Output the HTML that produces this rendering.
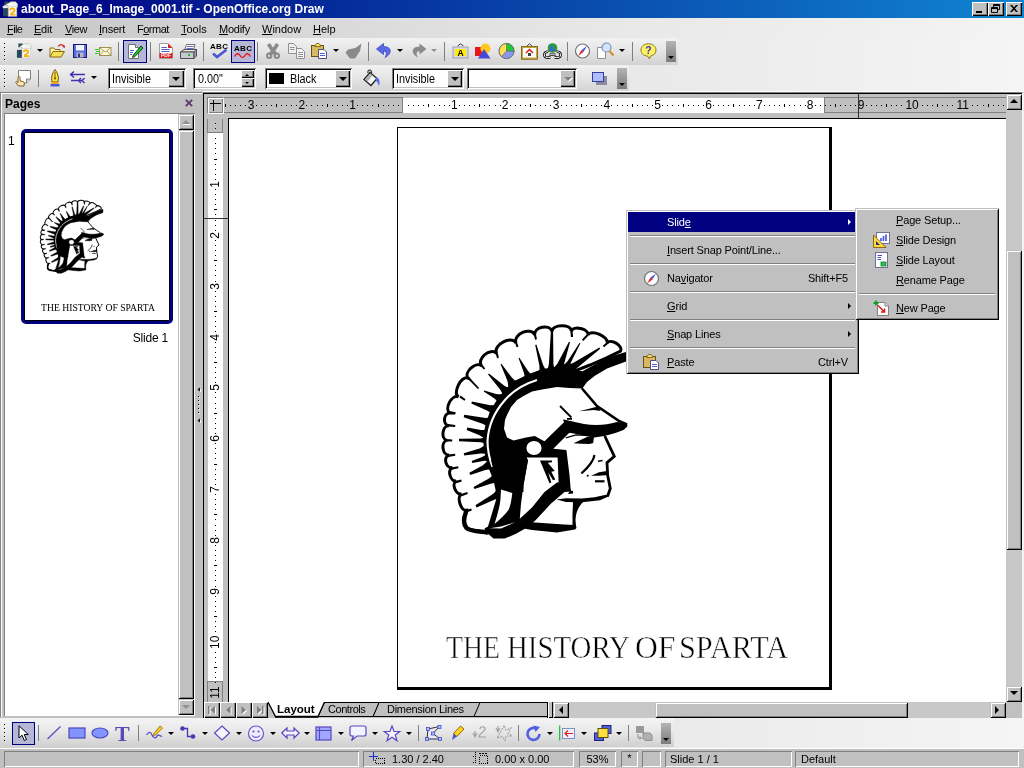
<!DOCTYPE html>
<html><head><meta charset="utf-8"><title>OpenOffice.org Draw</title>
<style>
html,body{margin:0;padding:0;}
body{width:1024px;height:768px;overflow:hidden;position:relative;background:#c0c0c0;font-family:"Liberation Sans",sans-serif;font-size:11px;color:#000;}
.a{position:absolute;}
.t{position:absolute;white-space:nowrap;line-height:13px;}
u{text-decoration:underline;text-underline-offset:1px;}
.sep{position:absolute;width:1px;background:#808080;height:19px;}
.dd{position:absolute;width:0;height:0;border-left:3px solid transparent;border-right:3px solid transparent;border-top:3px solid #000;}
.dot{position:absolute;width:2px;background-image:repeating-linear-gradient(180deg,#000 0,#000 1px,transparent 1px,transparent 4px),repeating-linear-gradient(180deg,transparent 0,transparent 1px,#fff 1px,#fff 2px,transparent 2px,transparent 4px);background-size:1px 100%,1px 100%;background-position:0 0,1px 0;background-repeat:no-repeat;}
.raised{position:absolute;background:#c0c0c0;box-shadow:inset 1px 1px 0 #fff,inset -1px -1px 0 #000,inset -2px -2px 0 #808080;}
.sunk{position:absolute;background:#fff;box-shadow:inset 1px 1px 0 #808080,inset -1px -1px 0 #fff,inset 2px 2px 0 #000,inset -2px -2px 0 #c0c0c0;}
.fld{position:absolute;box-shadow:inset 1px 1px 0 #808080,inset -1px -1px 0 #fff;height:16px;top:751px;}
.pressed{position:absolute;background:#b6b6d6;border:1px solid #000080;box-sizing:border-box;}
svg{position:absolute;overflow:visible;}
.mi{font-size:11px;line-height:14px;letter-spacing:-0.150px;}
.msep{position:absolute;height:2px;background:linear-gradient(180deg,#808080 0,#808080 50%,#fff 50%,#fff 100%);}
.marr{position:absolute;width:0;height:0;border-top:3px solid transparent;border-bottom:3px solid transparent;border-left:3px solid #000;}
.rn{font-size:12px;line-height:15px;}
.mt{font-family:'Liberation Serif',serif;font-size:32px;line-height:36px;transform-origin:0 0;-webkit-text-stroke:0.5px #fff;}
.sbtn{position:absolute;background:#c0c0c0;box-shadow:inset 1px 1px 0 #c0c0c0,inset -1px -1px 0 #000,inset 2px 2px 0 #fff,inset -2px -2px 0 #808080;}
#root{position:absolute;left:0;top:0;width:1024px;height:768px;will-change:transform;}

</style></head>
<body>
<div id="root">
<!-- title bar -->
<div class="a" style="left:0;top:0;width:1024px;height:18px;background:linear-gradient(90deg,#000080 0,#1084d0 100%);"></div>
<svg style="left:2px;top:1px" width="16" height="16" viewBox="0 0 16.500 16.500"><path d="M2.500 0.500 H7 V5 H2.500Z" fill="#2a4e56"/><path d="M1 6.500 H6.500 V15.800 H1Z" fill="#27485a"/><path d="M0.500 5.800 L3 4.200 L6.500 5 L6.500 7.200 L1 7.500 Z" fill="#e8e8e8"/><path d="M6 3 L9 0.800 L14 0.800 L16 3 V6.500 H6Z" fill="#f2f2f2" stroke="#b8b8a8" stroke-width="0.600"/><path d="M4 3.200 L9.500 2.300 L10 3.500 L5 4.500Z" fill="#fff"/><path d="M6.500 6 H15.200 V15.800 H6.500Z" fill="#fff" stroke="#c4c4c4" stroke-width="0.600"/><path d="M8.300 9.800 C8.300 7 13 7 13 9.800 C13 12 9 11.600 9.200 14 H14" stroke="#f8b010" stroke-width="1.900" fill="none"/></svg>
<div class="t" style="left:21px;top:2px;color:#fff;font-weight:bold;font-size:12px;line-height:14px;letter-spacing:0.030px">about_Page_6_Image_0001.tif - OpenOffice.org Draw</div>
<div class="raised" style="left:972px;top:2px;width:16px;height:14px"></div>
<div class="a" style="left:976px;top:11px;width:6px;height:2px;background:#000"></div>
<div class="raised" style="left:988px;top:2px;width:16px;height:14px"></div>
<svg style="left:991px;top:4px" width="10" height="10" viewBox="0 0 10 10"><path d="M2.5 0.5 H8.5 V5.5 H6.5 M2.5 1.5 H8.5 M2.5 0.5 V3" fill="none" stroke="#000" stroke-width="1"/><path d="M0.5 3.5 H6.5 V8.5 H0.5 Z M0.5 4.5 H6.5" fill="none" stroke="#000" stroke-width="1"/></svg>
<div class="raised" style="left:1006px;top:2px;width:16px;height:14px"></div>
<svg style="left:1010px;top:5px" width="8" height="7" viewBox="0 0 8 7"><path d="M0 0 H2 L4 2.3 L6 0 H8 L5 3.5 L8 7 H6 L4 4.7 L2 7 H0 L3 3.5 Z" fill="#000"/></svg>
<!-- menu bar -->
<div class="a" style="left:0;top:18px;width:1024px;height:20px;background:linear-gradient(90deg,#c6c6c6 0,#d8d8d8 30%,#e8e8e8 60%,#f4f4f4 100%);"></div>
<div class="t" style="left:7px;top:23px;letter-spacing:-0.600px"><u>F</u>ile</div>
<div class="t" style="left:34px;top:23px;letter-spacing:-0.250px"><u>E</u>dit</div>
<div class="t" style="left:65px;top:23px;letter-spacing:-0.400px"><u>V</u>iew</div>
<div class="t" style="left:99px;top:23px;letter-spacing:-0.250px"><u>I</u>nsert</div>
<div class="t" style="left:137px;top:23px;letter-spacing:-0.500px">F<u>o</u>rmat</div>
<div class="t" style="left:181px;top:23px"><u>T</u>ools</div>
<div class="t" style="left:219px;top:23px;letter-spacing:-0.250px"><u>M</u>odify</div>
<div class="t" style="left:262px;top:23px"><u>W</u>indow</div>
<div class="t" style="left:313px;top:23px"><u>H</u>elp</div>

<!-- toolbar background -->
<div class="a" style="left:0;top:38px;width:1024px;height:54px;background:linear-gradient(90deg,#cecece 0,#dadada 30%,#e8e8e8 60%,#f5f5f5 100%);"></div>
<div class="a" style="left:0;top:38px;width:678px;height:27px;background:linear-gradient(180deg,#f2f2f2 0,#e6e6e6 45%,#d2d2d2 100%);"></div>
<div class="a" style="left:0;top:65px;width:629px;height:27px;background:linear-gradient(180deg,#f2f2f2 0,#e6e6e6 45%,#d2d2d2 100%);"></div>
<!-- toolbar 1 -->
<div class="dot" style="left:4px;top:43px;height:18px"></div>
<svg style="left:16px;top:43px" width="15.500" height="15.500" viewBox="0 0 16.500 16.500"><path d="M2.500 0.500 H7 V5 H2.500Z" fill="#2a4e56"/><path d="M1 6.500 H6.500 V15.800 H1Z" fill="#27485a"/><path d="M0.500 5.800 L3 4.200 L6.500 5 L6.500 7.200 L1 7.500 Z" fill="#e8e8e8"/><path d="M6 3 L9 0.800 L14 0.800 L16 3 V6.500 H6Z" fill="#f2f2f2" stroke="#b8b8a8" stroke-width="0.600"/><path d="M4 3.200 L9.500 2.300 L10 3.500 L5 4.500Z" fill="#fff"/><path d="M6.500 6 H15.200 V15.800 H6.500Z" fill="#fff" stroke="#c4c4c4" stroke-width="0.600"/><path d="M8.300 9.800 C8.300 7 13 7 13 9.800 C13 12 9 11.600 9.200 14 H14" stroke="#f8b010" stroke-width="1.900" fill="none"/></svg>
<div class="dd" style="left:37px;top:49px"></div>
<svg style="left:49px;top:43px" width="17" height="16" viewBox="0 0 17 16"><path d="M1 14 V5 H5 L6 6.5 H11 V9" fill="#fff6b0" stroke="#8a6a10" stroke-width="1"/><path d="M1 14 L4 8.5 H15.5 L12 14 Z" fill="#f6e05a" stroke="#8a6a10" stroke-width="1"/><path d="M9 3.5 C11 1 14 1 15 4" fill="none" stroke="#d02020" stroke-width="1.2"/><path d="M13.2 3.2 L15.6 5.2 L16 2.2Z" fill="#d02020"/></svg>
<svg style="left:73px;top:44px" width="14" height="14" viewBox="0 0 14 14"><rect x="0.5" y="0.5" width="13" height="13" fill="#5a6ee0" stroke="#1a1a70"/><rect x="3" y="1" width="8" height="5.5" fill="#f4f4ff"/><rect x="3.5" y="8.5" width="7" height="5" fill="#b8b8c8"/><rect x="5" y="9.5" width="2" height="3.5" fill="#30308a"/></svg>
<svg style="left:95px;top:46px" width="17" height="11" viewBox="0 0 17 11"><rect x="4.5" y="1.5" width="11.5" height="8" fill="#fffbd8" stroke="#a09050"/><path d="M4.5 1.5 L10.2 6 L16 1.5 M4.5 9.5 L8.5 5 M16 9.5 L12 5" fill="none" stroke="#a09050" stroke-width="0.9"/><path d="M0 3.5 H3.5 M1 5.5 H4 M0 7.5 H3.5" stroke="#20d020" stroke-width="1.2"/></svg>
<div class="sep" style="left:118px;top:42px"></div>
<div class="pressed" style="left:123px;top:40px;width:24px;height:23px"></div>
<svg style="left:127px;top:43px" width="17" height="17" viewBox="0 0 17 17"><path d="M1.5 1.5 H8.5 L11.5 4.5 V15.5 H1.5 Z" fill="#fff" stroke="#707070"/><path d="M8.5 1.5 V4.5 H11.5" fill="#e0e0e0" stroke="#707070"/><path d="M3 7.5 H7 M3 9.5 H6 M3 11.5 H5" stroke="#5060d0" stroke-width="1"/><path d="M14 3 L16 5 L8 13.5 L5.5 14.5 L6.3 12 Z" fill="#18c838" stroke="#103010" stroke-width="0.9"/></svg>
<div class="sep" style="left:150px;top:42px"></div>
<svg style="left:159px;top:43px" width="14" height="16" viewBox="0 0 14 16"><path d="M0.5 0.5 H9 L13.5 5 V15.5 H0.5 Z" fill="#fff" stroke="#a0a0a0"/><path d="M9 0.5 L13.5 5 H9 Z" fill="#e02020"/><path d="M2.5 4.5 H8 M2.5 6.5 H10.5 M2.5 8.5 H10.5" stroke="#5060d0"/><rect x="0.5" y="10" width="13" height="5" fill="#e02020"/><text x="7" y="14.3" font-size="5" font-weight="bold" fill="#fff" text-anchor="middle" font-family="Liberation Sans,sans-serif">PDF</text></svg>
<svg style="left:180px;top:44px" width="18" height="15" viewBox="0 0 18 15"><path d="M4.5 6 L6.5 0.5 H15 L13.5 6" fill="#fff" stroke="#707070"/><path d="M7 2.5 H13.5 M6.5 4.5 H13" stroke="#5060d0" stroke-width="0.9"/><path d="M0.5 8 L4 5.5 H16.5 L14 8 Z" fill="#e8e8e8" stroke="#505050"/><path d="M0.5 8 H14 V14.5 H0.5 Z" fill="#c4c8d0" stroke="#505050"/><path d="M14 8 L16.5 5.5 V12 L14 14.5Z" fill="#9aa0a8" stroke="#505050"/><rect x="8" y="10" width="2" height="2" fill="#10c030"/></svg>
<div class="sep" style="left:203px;top:42px"></div>
<div class="t" style="left:210px;top:42px;font-size:8px;font-weight:bold;line-height:9px;letter-spacing:0.3px">ABC</div>
<svg style="left:212px;top:49px" width="16" height="10" viewBox="0 0 16 10"><path d="M1 4.5 L5 8 L14.5 0.8" fill="none" stroke="#4858d0" stroke-width="2.6"/></svg>
<div class="pressed" style="left:231px;top:40px;width:24px;height:23px"></div>
<div class="t" style="left:234px;top:44px;font-size:8px;font-weight:bold;line-height:9px;letter-spacing:0.3px">ABC</div>
<svg style="left:234px;top:53px" width="17" height="5" viewBox="0 0 17 5"><path d="M0.5 3.5 C2.5 0 4.5 0 6 2.5 S9.500 5 11 2.500 S14.500 0 16.5 3.500" fill="none" stroke="#f01010" stroke-width="1.3"/></svg>
<div class="sep" style="left:257px;top:42px"></div>
<svg style="left:266px;top:43px" width="14" height="16" viewBox="0 0 14 16"><path d="M2.500 1 L7 8 L11.500 1 M7 8 L3.500 12 M7 8 L10.500 12" fill="none" stroke="#8a8a8a" stroke-width="3.600" stroke-linejoin="round"/><circle cx="3.200" cy="12.800" r="2.200" fill="none" stroke="#8a8a8a" stroke-width="2"/><circle cx="10.800" cy="12.800" r="2.200" fill="none" stroke="#8a8a8a" stroke-width="2"/></svg>
<svg style="left:288px;top:43px" width="17" height="16" viewBox="0 0 17 16"><path d="M0.500 0.500 H5.5 L8.500 3.500 V10.500 H0.500 Z" fill="#f0f0f0" stroke="#909090"/><path d="M2 4.5 H6.500 M2 6.500 H6.500" stroke="#909090"/><path d="M8.500 5.500 H13.500 L16.500 8.500 V15.500 H8.500 Z" fill="#f8f8f8" stroke="#909090"/><path d="M10 9.500 H15 M10 11.500 H15 M10 13.500 H15" stroke="#909090"/></svg>
<svg style="left:311px;top:43px" width="17" height="16" viewBox="0 0 17 16"><rect x="0.500" y="2.500" width="12" height="11" fill="#d8b860" stroke="#6a5018"/><path d="M4 2.500 L5.500 0.500 H8 L9.500 2.500 V3.500 H4Z" fill="#f8e060" stroke="#6a5018" stroke-width="0.8"/><path d="M7.500 6.500 H13 L15.500 9 V15.500 H7.500 Z" fill="#fff" stroke="#505080"/><path d="M9 10.500 H14 M9 12.500 H14" stroke="#5060d0"/></svg>
<div class="dd" style="left:333px;top:49px"></div>
<svg style="left:345px;top:43px" width="17" height="16" viewBox="0 0 17 16"><path d="M16.500 0.500 L15 8 L10 15.500 H5 L0.500 9.500 L3 6.500 L10.500 5 Z" fill="#8a8a8a"/></svg>
<div class="sep" style="left:368px;top:42px"></div>
<svg style="left:376px;top:43px" width="17" height="15" viewBox="0 0 17 15"><path d="M7.500 0.500 L0.500 6 L7.500 11.500 V8.300 C10.500 8.300 11.500 10.500 9 14.500 C16 11 16.500 3.800 7.500 3.500 Z" fill="#5868e8" stroke="#3848b0" stroke-width="0.800"/></svg>
<div class="dd" style="left:397px;top:49px"></div>
<svg style="left:410px;top:43px" width="17" height="15" viewBox="0 0 17 15"><path d="M9.500 0.500 L16.500 6 L9.500 11.500 V8.300 C6.500 8.300 5.500 10.500 8 14.500 C1 11 0.500 3.800 9.500 3.500 Z" fill="#8a8a8a"/></svg>
<div class="dd" style="left:431px;top:49px;border-top-color:#909090"></div>
<div class="sep" style="left:444px;top:42px"></div>
<svg style="left:452px;top:43px" width="17" height="16" viewBox="0 0 17 16"><path d="M5.500 3 L8.500 0.800 L11.500 3" fill="none" stroke="#404040"/><rect x="1" y="4" width="15" height="11" fill="#d8d8e0" stroke="#a0a0b0"/><rect x="3" y="6" width="11" height="7" fill="#ffee00"/><text x="8.500" y="13" font-size="8.500" font-weight="bold" text-anchor="middle" font-family="Liberation Sans,sans-serif">A</text></svg>
<svg style="left:475px;top:43px" width="17" height="16" viewBox="0 0 17 16"><rect x="0" y="4" width="9" height="9" fill="#e81818"/><circle cx="10.500" cy="5.500" r="5" fill="#ffc820"/><path d="M9 6 L15.500 15.500 H3 Z" fill="#4848d8"/></svg>
<svg style="left:498px;top:43px" width="17" height="16" viewBox="0 0 17 16"><circle cx="8.500" cy="8" r="7.500" fill="#ffe050" stroke="#606060"/><path d="M8.500 8 L8.500 0.500 A7.500 7.500 0 0 1 16 8.500 Z" fill="#20c838" stroke="#606060" stroke-width="0.6"/><path d="M8.500 8 L16 8.500 A7.500 7.500 0 0 1 3.500 13.600 Z" fill="#8898f0" stroke="#606060" stroke-width="0.6"/></svg>
<svg style="left:521px;top:43px" width="17" height="16" viewBox="0 0 17 16"><path d="M5.500 3.500 L8.500 0.800 L11.500 3.500" fill="none" stroke="#404040"/><rect x="1" y="4" width="15" height="11.500" fill="#fff" stroke="#c8a838" stroke-width="2"/><rect x="0.300" y="3.300" width="16.400" height="12.900" fill="none" stroke="#5a4a10" stroke-width="0.600"/><path d="M5 10 L8.500 6.500 L12 10" fill="none" stroke="#e01818" stroke-width="1.500"/><rect x="7" y="10" width="3" height="3" fill="#404040"/></svg>
<svg style="left:544px;top:43px" width="17" height="16" viewBox="0 0 17 16"><circle cx="8.500" cy="5" r="4.800" fill="#2a9a40"/><path d="M6 2 L9 4 L8 7 L11 6 L12 8 L6 8Z" fill="#4060e0"/><path d="M4.500 9 A3 3 0 1 0 4.500 14.500 H6.500 M12.500 9 A3 3 0 1 1 12.500 14.500 H10.500 M5.500 11.800 H11.500" fill="none" stroke="#000" stroke-width="2.600"/><path d="M4.500 9 A3 3 0 1 0 4.500 14.500 H6.500 M12.500 9 A3 3 0 1 1 12.500 14.500 H10.500 M5.500 11.800 H11.500" fill="none" stroke="#fff" stroke-width="1"/></svg>
<div class="sep" style="left:567px;top:42px"></div>
<svg style="left:574px;top:43px" width="17" height="16" viewBox="0 0 17 16"><circle cx="8.500" cy="8" r="7" fill="#fff" stroke="#707078" stroke-width="1.200"/><path d="M13 3 L9.500 9 L7.500 7 Z" fill="#4858e0"/><path d="M4 13 L7.500 7 L9.500 9 Z" fill="#e82020"/></svg>
<svg style="left:597px;top:42px" width="18" height="17" viewBox="0 0 18 17"><path d="M0.500 5.500 H8.500 V16.500 H0.500 Z" fill="#fff" stroke="#909090"/><circle cx="9.500" cy="5.500" r="4.500" fill="#d0e4ff" stroke="#8090b0" stroke-width="1.200"/><path d="M12.500 9 L16.500 13.500" stroke="#d09030" stroke-width="2.200"/></svg>
<div class="dd" style="left:619px;top:49px"></div>
<div class="sep" style="left:632px;top:42px"></div>
<svg style="left:640px;top:43px" width="17" height="17" viewBox="0 0 17 17"><path d="M8.500 0.800 C13 0.800 16 3.500 16 7 C16 10.500 13.500 12.500 10.500 13 L9.500 16 L7.500 13 C3.500 12.800 1 10.500 1 7 C1 3.500 4 0.800 8.500 0.800 Z" fill="#fff060" stroke="#807020" stroke-width="0.900"/><text x="8.500" y="11" font-size="10.500" font-weight="bold" fill="#3838c8" text-anchor="middle" font-family="Liberation Sans,sans-serif">?</text></svg>
<div class="a" style="left:666px;top:41px;width:10px;height:21px;background:linear-gradient(180deg,#b4b4b4,#7c7c7c)"></div>
<div class="dd" style="left:668px;top:56px"></div>
<!-- toolbar 2 -->
<div class="dot" style="left:4px;top:70px;height:18px"></div>
<svg style="left:15px;top:70px" width="17" height="17" viewBox="0 0 17 17"><path d="M3.500 0.500 H15.500 V9 L11.500 13 H3.500 Z" fill="#fff" stroke="#808080"/><path d="M15.500 9 H11.500 V13" fill="#d8d8d8" stroke="#808080"/><path d="M3 7.500 C3 6 5 6 5 7.500 V11 L8 11.500 C9.500 12 9.500 13 9 16 H3.500 L0.800 12.500 C0.500 11.500 2 11 3 12.500 Z" fill="#ffe8b0" stroke="#705020" stroke-width="0.900"/></svg>
<div class="sep" style="left:38px;top:70px;height:17px"></div>
<svg style="left:50px;top:69px" width="10" height="18" viewBox="0 0 10 18"><path d="M5 0.500 C8 5 9 8 8 13 H2 C1 8 2 5 5 0.500 Z" fill="#ffe040" stroke="#604800" stroke-width="0.900"/><path d="M5 3 V9" stroke="#604800" stroke-width="0.800"/><circle cx="5" cy="9.500" r="1" fill="#604800"/><rect x="1.500" y="13" width="7" height="2" fill="#f0a020"/><rect x="0.500" y="15" width="9" height="2.500" fill="#4858e0"/></svg>
<svg style="left:69px;top:71px" width="17" height="14" viewBox="0 0 17 14"><path d="M16 3.500 H2 M5 0.500 L1.500 3.500 L5 6.500" fill="none" stroke="#4030b0" stroke-width="1.400"/><path d="M2 9.500 H14 M12 7 L9.500 9.500 L12 12 M15.500 7 L13 9.500 L15.500 12" fill="none" stroke="#4030b0" stroke-width="1.400"/></svg>
<div class="dd" style="left:91px;top:76px"></div>
<div class="sunk" style="left:108px;top:68px;width:78px;height:21px"></div>
<div class="raised" style="left:168px;top:70px;width:16px;height:17px"></div>
<div class="dd" style="left:172px;top:77px;border-width:4px 4px 0 4px;border-top-width:4px"></div>
<div class="t" style="left:112px;top:72px;font-size:12px;line-height:14px;transform-origin:0 0;transform:scaleX(0.900)">Invisible</div>
<div class="sunk" style="left:193px;top:68px;width:63px;height:21px"></div>
<div class="t" style="left:198px;top:72px;font-size:12px;line-height:14px;transform-origin:0 0;transform:scaleX(0.900)">0.00"</div>
<div class="raised" style="left:241px;top:70px;width:13px;height:8px"></div>
<div class="raised" style="left:241px;top:78px;width:13px;height:9px"></div>
<div class="dd" style="left:245px;top:74px;border-width:0 2px 2px 2px;border-top:none;border-bottom:2px solid #000;border-left:2px solid transparent;border-right:2px solid transparent"></div>
<div class="dd" style="left:245px;top:82px;border-width:2px 2px 0 2px;border-top:2px solid #000;border-left:2px solid transparent;border-right:2px solid transparent"></div>
<div class="sunk" style="left:265px;top:68px;width:87px;height:21px"></div>
<div class="a" style="left:269px;top:73px;width:15px;height:11px;background:#000"></div>
<div class="t" style="left:290px;top:72px;font-size:12px;line-height:14px;transform-origin:0 0;transform:scaleX(0.900)">Black</div>
<div class="raised" style="left:335px;top:70px;width:15px;height:17px"></div>
<div class="dd" style="left:339px;top:77px;border-width:4px 4px 0 4px"></div>
<svg style="left:363px;top:69px" width="17" height="18" viewBox="0 0 17 18"><path d="M5 4 C4 0 9 0 8.500 4" fill="none" stroke="#303030" stroke-width="1.200"/><path d="M7 3.500 L14 9.500 L8 16.500 L1 10.500 Z" fill="#f8f8f8" stroke="#202020" stroke-width="1.300"/><path d="M1.800 10.500 L7 4.500 L9.500 6.500 L4.500 12.500 Z" fill="#b0b0b0"/><path d="M13.500 8 C17 10 17 13.500 16 17 C15 14.500 14 12.500 12.500 11 Z" fill="#5868f0"/></svg>
<div class="sunk" style="left:392px;top:68px;width:72px;height:21px"></div>
<div class="t" style="left:396px;top:72px;font-size:12px;line-height:14px;transform-origin:0 0;transform:scaleX(0.900)">Invisible</div>
<div class="raised" style="left:447px;top:70px;width:15px;height:17px"></div>
<div class="dd" style="left:451px;top:77px;border-width:4px 4px 0 4px"></div>
<div class="sunk" style="left:467px;top:68px;width:110px;height:21px"></div>
<div class="raised" style="left:560px;top:70px;width:15px;height:17px"></div>
<div class="dd" style="left:565px;top:78px;border-width:4px 4px 0 4px;border-top-color:#fff"></div>
<div class="dd" style="left:564px;top:77px;border-width:4px 4px 0 4px;border-top-color:#808080"></div>
<svg style="left:592px;top:72px" width="16" height="14" viewBox="0 0 16 14"><rect x="4" y="4" width="11" height="9" fill="#8c8c9c"/><rect x="0.500" y="0.500" width="11" height="9" fill="#b0bcff" stroke="#3040a0"/></svg>
<div class="a" style="left:617px;top:68px;width:10px;height:21px;background:linear-gradient(180deg,#b4b4b4,#7c7c7c)"></div>
<div class="dd" style="left:619px;top:83px"></div>

<!-- pages panel -->
<div class="a" style="left:0;top:92px;width:203px;height:626px;background:#c0c0c0"></div>
<div class="a" style="left:0;top:92px;width:202px;height:1px;background:#808080"></div>
<div class="a" style="left:0;top:93px;width:1px;height:624px;background:#808080"></div>
<div class="a" style="left:1px;top:93px;width:201px;height:1px;background:#fff"></div>
<div class="a" style="left:1px;top:93px;width:1px;height:624px;background:#fff"></div>
<div class="t" style="left:5px;top:97px;font-weight:bold;font-size:12px;line-height:14px">Pages</div>
<svg style="left:185px;top:99px" width="8" height="8" viewBox="0 0 8 8"><path d="M0.800 0.800 L7.200 7.200 M7.200 0.800 L0.800 7.200" stroke="#5a3868" stroke-width="1.800" fill="none"/></svg>
<div class="a" style="left:4px;top:113px;width:191px;height:603px;background:#fff;box-shadow:inset 1px 1px 0 #808080,inset -1px -1px 0 #fff"></div>
<div class="a" style="left:178px;top:114px;width:16px;height:601px;background:#c8c8c8"></div>
<div class="sbtn" style="left:178px;top:114px;width:16px;height:16px"></div>
<div class="dd" style="left:182px;top:120px;border-width:0 4px 4px 4px;border-top:none;border-left:4px solid transparent;border-right:4px solid transparent;border-bottom:4px solid #909090"></div>
<div class="a" style="left:183px;top:124px;width:7px;height:1px;background:#fff"></div>
<div class="sbtn" style="left:178px;top:130px;width:16px;height:569px"></div>
<div class="sbtn" style="left:178px;top:699px;width:16px;height:16px"></div>
<div class="dd" style="left:182px;top:705px;border-width:4px 4px 0 4px;border-top-color:#909090"></div>
<div class="t" style="left:8px;top:135px;font-size:12px">1</div>
<div class="a" style="left:21px;top:129px;width:152px;height:195px;box-sizing:border-box;border:3px solid #000080;border-radius:5px;background:#000"></div>
<div class="a" style="left:25px;top:133px;width:144px;height:187px;background:#fff"></div>
<svg style="left:40px;top:199px" width="64" height="74" viewBox="442 322 187 216"><g stroke="#000" stroke-width="1.2" stroke-linejoin="round"><path d="M620.5 351.0 C623.2 345.6 610.5 338.1 607.0 343.0 C609.1 336.6 591.2 328.9 588.0 334.8 C588.8 328.8 573.2 325.3 571.4 331.0 C570.6 323.7 552.4 324.2 552.0 331.5 C550.0 323.7 533.8 326.8 534.8 334.8 C530.5 326.5 512.8 334.2 516.0 343.0 C511.0 335.1 492.7 345.0 496.6 353.5 C490.4 347.0 476.3 358.8 481.6 366.0 C476.3 360.9 463.6 372.1 468.0 378.0 C461.2 375.3 452.2 393.2 458.5 397.0 C451.8 394.0 443.8 409.1 450.0 413.0 C443.3 412.9 442.4 424.9 449.0 425.8 C442.3 425.3 440.5 439.1 447.0 440.4 C440.5 441.7 442.3 455.5 449.0 455.0 C442.7 457.2 446.0 468.9 452.5 467.5 C446.8 469.5 450.4 482.2 456.3 481.0 C451.0 483.8 456.1 495.8 461.8 493.8 C456.2 495.9 460.6 511.4 466.5 510.3 C466 512 462 520 465 526 C468 531 478 531 486 532 L500 528 L515 522 L497.5 492.0 L495.0 480.0 L491.0 470.0 L487.5 458.0 L485.5 449.0 L484.8 441.0 L485.5 432.0 L487.5 423.0 L491.0 413.0 L495.5 405.0 L501.0 397.0 L507.0 390.0 L514.0 383.0 L528.5 376.0 L543.0 370.5 L551.0 369.5 L565.0 368.5 L575.0 371.0 L590.0 365.0 L606.0 358.0 L620.5 351.0 Z" fill="#fff" stroke="#000" stroke-width="3" stroke-linejoin="miter"/>
<path d="M550.9 331.0 L548.9 363.9 Q548.0 370.9 543.5 372.3 L558.5 372.7 Q554.0 371.1 553.4 364.1 L553.1 331.0 Z" fill="#000"/>
<path d="M535.2 345.0 L539.4 365.7 Q540.3 372.7 536.4 375.3 L550.4 371.6 Q545.7 371.3 543.0 364.8 L536.4 344.6 Z" fill="#000"/>
<path d="M569.0 341.8 L557.6 363.3 Q553.8 369.3 549.1 369.1 L565.8 375.7 Q562.2 372.7 563.6 365.7 L570.0 342.2 Z" fill="#000"/>
<path d="M579.6 342.8 L567.7 361.0 Q563.4 366.6 558.8 365.7 L571.4 372.9 Q568.2 369.4 570.8 362.8 L580.4 343.2 Z" fill="#000"/>
<path d="M599.4 347.6 L573.1 363.0 Q569.2 364.7 566.5 363.5 L574.0 374.2 Q573.8 371.3 576.8 368.2 L600.2 348.8 Z" fill="#000"/>
<path d="M518.6 358.2 L523.9 372.7 Q525.9 379.6 522.5 382.9 L536.8 375.8 Q532.1 376.4 527.9 370.7 L519.4 357.8 Z" fill="#000"/>
<path d="M500.6 364.2 L507.2 380.2 Q509.5 387.0 506.4 390.5 L521.1 382.1 Q516.5 383.0 511.8 377.6 L501.4 363.8 Z" fill="#000"/>
<path d="M488.1 374.4 L500.1 389.5 Q504.2 395.3 502.1 399.6 L514.1 387.6 Q509.8 389.7 504.0 385.6 L488.9 373.6 Z" fill="#000"/>
<path d="M483.8 391.5 L494.1 398.3 Q499.8 402.6 499.3 407.4 L506.4 391.9 Q503.2 395.4 496.1 393.9 L484.2 390.5 Z" fill="#000"/>
<path d="M471.3 403.5 L487.4 410.7 Q493.7 414.0 493.8 418.8 L499.1 402.1 Q496.3 406.0 489.2 405.0 L471.9 401.5 Z" fill="#000"/>
<path d="M463.7 417.2 L482.5 423.8 Q489.0 426.6 489.3 431.4 L493.6 414.4 Q491.0 418.4 484.0 417.8 L464.3 414.8 Z" fill="#000"/>
<path d="M466.7 430.0 L479.5 435.2 Q485.9 438.3 486.1 443.1 L490.8 426.7 Q488.1 430.7 481.0 430.0 L467.3 427.6 Z" fill="#000"/>
<path d="M459.0 441.3 L480.4 442.3 Q485.9 443.1 487.4 446.6 L487.6 434.6 Q486.1 438.1 480.4 438.6 L459.0 438.7 Z" fill="#000"/>
<path d="M464.3 455.6 L480.7 453.5 Q487.8 453.2 490.2 457.3 L486.7 441.1 Q486.2 445.8 479.6 448.4 L463.7 453.2 Z" fill="#000"/>
<path d="M472.3 463.0 L483.1 460.9 Q488.8 460.4 491.2 463.4 L487.7 450.8 Q487.2 454.6 482.1 457.1 L471.7 461.0 Z" fill="#000"/>
<path d="M470.3 474.9 L484.6 470.2 Q491.5 468.4 494.7 472.0 L488.1 456.8 Q488.5 461.6 482.5 465.4 L469.3 472.7 Z" fill="#000"/>
<path d="M474.5 489.1 L490.6 483.7 Q497.5 481.9 500.6 485.5 L494.1 470.3 Q494.5 475.1 488.5 478.8 L473.5 486.9 Z" fill="#000"/>
<path d="M476.6 507.4 L494.8 499.6 Q500.2 497.8 503.2 500.2 L496.5 487.4 Q496.8 491.2 492.2 494.6 L475.4 505.2 Z" fill="#000"/>
<path d="M570.3 330.1 L570.9 337.1 L573.1 336.9 L572.5 329.9Z" fill="#000"/>
<path d="M587.7 333.3 L581.9 339.7 L583.3 341.1 L589.3 334.7Z" fill="#000"/>
<path d="M607.3 341.7 L602.9 345.8 L604.1 347.2 L608.7 343.3Z" fill="#000"/>
<path d="M533.7 334.2 L535.1 339.7 L536.9 339.3 L535.9 333.8Z" fill="#000"/>
<path d="M515.0 342.8 L516.6 347.3 L518.4 346.7 L517.0 342.2Z" fill="#000"/>
<path d="M495.5 353.3 L497.1 358.2 L498.9 357.8 L497.7 352.7Z" fill="#000"/>
<path d="M480.8 366.2 L483.8 369.6 L485.2 368.4 L482.4 364.8Z" fill="#000"/>
<path d="M467.2 378.3 L477.9 389.1 L479.1 387.9 L468.8 376.7Z" fill="#000"/>
<path d="M459.4 397.4 L464.5 400.7 L465.5 399.3 L460.6 395.6Z" fill="#000"/>
<path d="M455.7 412.3 L449.2 411.1 L448.8 413.5 L455.3 414.3Z" fill="#000"/>
<path d="M455.3 424.9 L448.1 424.0 L447.9 426.4 L455.1 426.9Z" fill="#000"/>
<path d="M452.2 439.4 L446.0 439.0 L446.0 441.4 L452.2 441.4Z" fill="#000"/>
<path d="M455.1 453.8 L447.8 454.6 L448.2 457.0 L455.3 455.8Z" fill="#000"/>
<path d="M458.1 466.2 L451.3 467.4 L451.7 469.8 L458.5 468.2Z" fill="#000"/>
<path d="M461.2 479.5 L455.0 481.0 L455.6 483.4 L461.8 481.5Z" fill="#000"/>
<path d="M467.2 492.1 L460.4 494.2 L461.2 496.4 L467.8 493.9Z" fill="#000"/>
<path d="M471.2 508.6 L465.1 510.6 L465.9 512.8 L471.8 510.4Z" fill="#000"/>
<path d="M582.0 371.0 L575.0 371.0 L565.0 368.5 L551.0 369.5 L543.0 370.5 L528.5 376.0 L514.0 383.0 L507.0 390.0 L501.0 397.0 L495.5 405.0 L491.0 413.0 L487.5 423.0 L485.5 432.0 L484.8 441.0 L485.5 449.0 L487.5 458.0 L491.0 470.0 L495.0 480.0 L497.5 492.0 L523.5 492.0 L523.5 485.0 L528.0 460.0 L526.6 457.5 L557.6 457.5 L559.0 491.5 L570.8 491.3 L569.5 475.0 L566.4 450.0 L553.3 448.8 L570.8 431.3 L565.8 420.6 L544.5 441.3 L542.0 440.0 L534.8 436.0 L526.0 437.5 L513.5 440.6 L507.0 437.5 L504.0 428.8 L505.0 420.0 L507.0 415.0 L511.0 407.0 L517.0 400.0 L523.5 396.0 L532.0 391.5 L542.0 389.5 L557.0 387.0 L569.5 388.0 L582.0 388.5Z" fill="#000"/>
<path d="M575.0 371.0 L565.0 368.5 L551.0 369.5 L543.0 370.5 L528.5 376.0 L514.0 383.0 L507.0 390.0 L501.0 397.0 L495.5 405.0" fill="none" stroke="#000" stroke-width="2.6" stroke-linejoin="round"/>
<path d="M626 352 L612 356 L599.5 362 L582 371.500 L572 374 L582 389 L587 382 L594.5 376 L607 368.5 L626 361.6 Z" fill="#000"/>
<path d="M466 512 C463.500 518 463.500 524 466.500 528 C469.500 531 478 531.300 487 532.500" fill="none" stroke="#000" stroke-width="4.500" stroke-linecap="round"/>
<path d="M537 380 C524 384 512 392 505 400 C496 410 488.500 424 487.500 441 C487.500 452 489.500 459 492.500 467" fill="none" stroke="#fff" stroke-width="2.100"/>
<ellipse cx="534" cy="448" rx="7.600" ry="6.900" fill="#fff"/>
<path d="M491 460 L528 460 L523.5 485 L521 503.8 L519.8 518.8 L524 522 L531 522.5 L529.8 525.6 L523.5 529.4 L516 533.8 L504.8 538.5 L493.5 538.5 L486 532 L484.5 528.5 L488 526.5 L496 500 L498 488.8 Z" fill="#000"/>
<path d="M501 489.4 L512.3 493 C511.500 500 510.500 506 508.5 510 C505 515 500 519 494.500 524 C497 516 499.500 508 500.4 500 Z" fill="#fff"/>
<path d="M489.5 528.3 L501 526.6 L515.500 522 L501 528.6 Z" fill="#fff"/>
<path d="M557 482.5 L544.5 492 L532 507.5 L519.500 519 L529 526 L535.8 520 L550.8 503.8 L564.5 492 L570.8 491.3 L569 482 Z" fill="#000"/>
<path d="M528 522 L564 524.4 L574.500 525 C577 526 577 528.500 575 529.4 L557 532.5 L532 530 L524 528.500 Z" fill="#000"/>
<path d="M573 501 L584 501 C578 507 576 512 575.500 520 L576 526 L572.500 526 L572.500 517 C572.500 510 573 506 573 501Z" fill="#000"/>
<path d="M556.500 499.400 L566 498.200 L582 498.600 L594.5 497.300 L606 494.800 L608.500 496.500 L600 500.300 L582 502.300 L566 502 Z" fill="#000"/>
<path d="M604.800 436 L614.300 456.300 L607 462.600 L607.600 475 L610.300 488.500 L607.500 496.500" fill="none" stroke="#000" stroke-width="2.800" stroke-linejoin="miter"/>
<path d="M563 419.500 C572 421 578 423 584 424 C594 425.500 606 425.500 617 422 L627 423.500 L627.500 426 C626 428 624 430 622 430.6 C614 434 602 437 594.5 437.5 C588 437 580 434.500 568 432.500 Z" fill="#000"/>
<path d="M582 388.5 L597 406 L619.5 421.3 L627 424.4" fill="none" stroke="#000" stroke-width="2.600"/>
<path d="M560 406 L571.4 417.5 M567 418.800 H572" fill="none" stroke="#000" stroke-width="1.800"/>
<path d="M579 411.3 L598 406.500 L600.500 411 L594 410 Z" fill="#000"/>
<path d="M573.500 443.300 L581 439.800 L587 437 L594 436.500 L593.200 443 L589.500 444 L581 443.800 Z" fill="#000"/>
<path d="M565.8 437.800 L576 434.800 L586 435.300" fill="none" stroke="#000" stroke-width="1.300"/>
<path d="M594.5 455 C593.500 462 588 467.500 581.4 473.500" fill="none" stroke="#000" stroke-width="2.200"/>
<path d="M598 461.200 L602.6 460.400" stroke="#000" stroke-width="1.500"/>
<path d="M591 475.800 L599 472.300 L608.500 470.800 L608.500 475 L599 475.800 Z" fill="#000"/>
<rect x="586.800" y="474.800" width="1.800" height="1.800" fill="#000"/>
<path d="M595 481.300 H604.500" stroke="#000" stroke-width="2.200"/>
<path d="M540 460.500 H552 V462.200 L547.800 462.800 L554.800 471 L551.300 471.800 L555.300 479.500 L553 480.300 L548.300 472.500 L551.300 482.500 L549.500 483.200 Z" fill="#000"/>
<path d="M570 490.500 L573 491 L573 493.500 L568 494 Z" fill="#000"/></g></svg>
<div class="t" style="left:41px;top:302px;font-family:'Liberation Serif',serif;font-size:10.500px;line-height:12px;transform-origin:0 0;transform:scaleX(0.920)">THE HISTORY OF SPARTA</div>
<div class="t" style="left:100px;top:332px;width:68px;text-align:right;font-size:12px;letter-spacing:-0.200px">Slide 1</div>
<div class="dot" style="left:198px;top:396px;height:18px"></div>
<svg style="left:196px;top:387px" width="5" height="36" viewBox="0 0 5 36"><path d="M4 0.500 L1.500 2.500 L4 4.500 Z M4 31.500 L1.500 33.500 L4 35.500 Z" fill="#000"/><path d="M4.500 2 V5 M4.500 33 V36" stroke="#fff" stroke-width="1"/></svg>

<!-- main drawing area -->
<div class="a" style="left:203px;top:92px;width:821px;height:626px;background:#c0c0c0"></div>
<div class="a" style="left:203px;top:91px;width:821px;height:1px;background:#fff"></div>
<div class="a" style="left:203px;top:92px;width:819px;height:1px;background:#808080"></div>
<div class="a" style="left:203px;top:93px;width:819px;height:1px;background:#000"></div>
<div class="a" style="left:203px;top:93px;width:1px;height:625px;background:#000"></div>
<div class="a" style="left:204px;top:94px;width:802px;height:24px;background:#c0c0c0"></div>
<div class="a" style="left:224px;top:97px;width:179px;height:16px;box-shadow:inset 0 1px 0 #808080,inset 0 -1px 0 #808080,inset -1px 0 0 #808080"></div>
<div class="a" style="left:403px;top:98px;width:421px;height:15px;background:#fff"></div>
<div class="a" style="left:824px;top:97px;width:182px;height:16px;box-shadow:inset 0 1px 0 #808080,inset 0 -1px 0 #808080,inset 1px 0 0 #808080"></div>
<div class="a" style="left:204px;top:118px;width:24px;height:584px;background:#c0c0c0"></div>
<div class="a" style="left:207px;top:119px;width:16px;height:14px;box-shadow:inset 1px 0 0 #808080,inset -1px 0 0 #808080,inset 0 -1px 0 #808080"></div>
<div class="a" style="left:208px;top:133px;width:15px;height:548px;background:#fff"></div>
<div class="a" style="left:207px;top:681px;width:16px;height:21px;box-shadow:inset 1px 0 0 #808080,inset -1px 0 0 #808080,inset 0 1px 0 #808080"></div>
<svg style="left:0;top:0" width="1024" height="768" viewBox="0 0 1024 768" shape-rendering="crispEdges"><rect x="225" y="104" width="1" height="3" fill="#000"/><rect x="230" y="105" width="1" height="1" fill="#000"/><rect x="235" y="105" width="1" height="1" fill="#000"/><rect x="240" y="105" width="1" height="1" fill="#000"/><rect x="245" y="105" width="1" height="1" fill="#000"/><rect x="256" y="105" width="1" height="1" fill="#000"/><rect x="261" y="105" width="1" height="1" fill="#000"/><rect x="266" y="105" width="1" height="1" fill="#000"/><rect x="271" y="105" width="1" height="1" fill="#000"/><rect x="276" y="104" width="1" height="3" fill="#000"/><rect x="281" y="105" width="1" height="1" fill="#000"/><rect x="286" y="105" width="1" height="1" fill="#000"/><rect x="291" y="105" width="1" height="1" fill="#000"/><rect x="296" y="105" width="1" height="1" fill="#000"/><rect x="306" y="105" width="1" height="1" fill="#000"/><rect x="311" y="105" width="1" height="1" fill="#000"/><rect x="317" y="105" width="1" height="1" fill="#000"/><rect x="322" y="105" width="1" height="1" fill="#000"/><rect x="327" y="104" width="1" height="3" fill="#000"/><rect x="332" y="105" width="1" height="1" fill="#000"/><rect x="337" y="105" width="1" height="1" fill="#000"/><rect x="342" y="105" width="1" height="1" fill="#000"/><rect x="347" y="105" width="1" height="1" fill="#000"/><rect x="357" y="105" width="1" height="1" fill="#000"/><rect x="362" y="105" width="1" height="1" fill="#000"/><rect x="367" y="105" width="1" height="1" fill="#000"/><rect x="372" y="105" width="1" height="1" fill="#000"/><rect x="378" y="104" width="1" height="3" fill="#000"/><rect x="383" y="105" width="1" height="1" fill="#000"/><rect x="388" y="105" width="1" height="1" fill="#000"/><rect x="393" y="105" width="1" height="1" fill="#000"/><rect x="398" y="105" width="1" height="1" fill="#000"/><rect x="408" y="105" width="1" height="1" fill="#000"/><rect x="413" y="105" width="1" height="1" fill="#000"/><rect x="418" y="105" width="1" height="1" fill="#000"/><rect x="423" y="105" width="1" height="1" fill="#000"/><rect x="428" y="104" width="1" height="3" fill="#000"/><rect x="434" y="105" width="1" height="1" fill="#000"/><rect x="439" y="105" width="1" height="1" fill="#000"/><rect x="444" y="105" width="1" height="1" fill="#000"/><rect x="449" y="105" width="1" height="1" fill="#000"/><rect x="459" y="105" width="1" height="1" fill="#000"/><rect x="464" y="105" width="1" height="1" fill="#000"/><rect x="469" y="105" width="1" height="1" fill="#000"/><rect x="474" y="105" width="1" height="1" fill="#000"/><rect x="479" y="104" width="1" height="3" fill="#000"/><rect x="484" y="105" width="1" height="1" fill="#000"/><rect x="489" y="105" width="1" height="1" fill="#000"/><rect x="495" y="105" width="1" height="1" fill="#000"/><rect x="500" y="105" width="1" height="1" fill="#000"/><rect x="510" y="105" width="1" height="1" fill="#000"/><rect x="515" y="105" width="1" height="1" fill="#000"/><rect x="520" y="105" width="1" height="1" fill="#000"/><rect x="525" y="105" width="1" height="1" fill="#000"/><rect x="530" y="104" width="1" height="3" fill="#000"/><rect x="535" y="105" width="1" height="1" fill="#000"/><rect x="540" y="105" width="1" height="1" fill="#000"/><rect x="545" y="105" width="1" height="1" fill="#000"/><rect x="550" y="105" width="1" height="1" fill="#000"/><rect x="561" y="105" width="1" height="1" fill="#000"/><rect x="566" y="105" width="1" height="1" fill="#000"/><rect x="571" y="105" width="1" height="1" fill="#000"/><rect x="576" y="105" width="1" height="1" fill="#000"/><rect x="581" y="104" width="1" height="3" fill="#000"/><rect x="586" y="105" width="1" height="1" fill="#000"/><rect x="591" y="105" width="1" height="1" fill="#000"/><rect x="596" y="105" width="1" height="1" fill="#000"/><rect x="601" y="105" width="1" height="1" fill="#000"/><rect x="611" y="105" width="1" height="1" fill="#000"/><rect x="617" y="105" width="1" height="1" fill="#000"/><rect x="622" y="105" width="1" height="1" fill="#000"/><rect x="627" y="105" width="1" height="1" fill="#000"/><rect x="632" y="104" width="1" height="3" fill="#000"/><rect x="637" y="105" width="1" height="1" fill="#000"/><rect x="642" y="105" width="1" height="1" fill="#000"/><rect x="647" y="105" width="1" height="1" fill="#000"/><rect x="652" y="105" width="1" height="1" fill="#000"/><rect x="662" y="105" width="1" height="1" fill="#000"/><rect x="667" y="105" width="1" height="1" fill="#000"/><rect x="672" y="105" width="1" height="1" fill="#000"/><rect x="678" y="105" width="1" height="1" fill="#000"/><rect x="683" y="104" width="1" height="3" fill="#000"/><rect x="688" y="105" width="1" height="1" fill="#000"/><rect x="693" y="105" width="1" height="1" fill="#000"/><rect x="698" y="105" width="1" height="1" fill="#000"/><rect x="703" y="105" width="1" height="1" fill="#000"/><rect x="713" y="105" width="1" height="1" fill="#000"/><rect x="718" y="105" width="1" height="1" fill="#000"/><rect x="723" y="105" width="1" height="1" fill="#000"/><rect x="728" y="105" width="1" height="1" fill="#000"/><rect x="733" y="104" width="1" height="3" fill="#000"/><rect x="739" y="105" width="1" height="1" fill="#000"/><rect x="744" y="105" width="1" height="1" fill="#000"/><rect x="749" y="105" width="1" height="1" fill="#000"/><rect x="754" y="105" width="1" height="1" fill="#000"/><rect x="764" y="105" width="1" height="1" fill="#000"/><rect x="769" y="105" width="1" height="1" fill="#000"/><rect x="774" y="105" width="1" height="1" fill="#000"/><rect x="779" y="105" width="1" height="1" fill="#000"/><rect x="784" y="104" width="1" height="3" fill="#000"/><rect x="789" y="105" width="1" height="1" fill="#000"/><rect x="794" y="105" width="1" height="1" fill="#000"/><rect x="800" y="105" width="1" height="1" fill="#000"/><rect x="805" y="105" width="1" height="1" fill="#000"/><rect x="815" y="105" width="1" height="1" fill="#000"/><rect x="820" y="105" width="1" height="1" fill="#000"/><rect x="825" y="105" width="1" height="1" fill="#000"/><rect x="830" y="105" width="1" height="1" fill="#000"/><rect x="835" y="104" width="1" height="3" fill="#000"/><rect x="840" y="105" width="1" height="1" fill="#000"/><rect x="845" y="105" width="1" height="1" fill="#000"/><rect x="850" y="105" width="1" height="1" fill="#000"/><rect x="855" y="105" width="1" height="1" fill="#000"/><rect x="866" y="105" width="1" height="1" fill="#000"/><rect x="871" y="105" width="1" height="1" fill="#000"/><rect x="876" y="105" width="1" height="1" fill="#000"/><rect x="881" y="105" width="1" height="1" fill="#000"/><rect x="886" y="104" width="1" height="3" fill="#000"/><rect x="891" y="105" width="1" height="1" fill="#000"/><rect x="896" y="105" width="1" height="1" fill="#000"/><rect x="901" y="105" width="1" height="1" fill="#000"/><rect x="906" y="105" width="1" height="1" fill="#000"/><rect x="916" y="105" width="1" height="1" fill="#000"/><rect x="922" y="105" width="1" height="1" fill="#000"/><rect x="927" y="105" width="1" height="1" fill="#000"/><rect x="932" y="105" width="1" height="1" fill="#000"/><rect x="937" y="104" width="1" height="3" fill="#000"/><rect x="942" y="105" width="1" height="1" fill="#000"/><rect x="947" y="105" width="1" height="1" fill="#000"/><rect x="952" y="105" width="1" height="1" fill="#000"/><rect x="957" y="105" width="1" height="1" fill="#000"/><rect x="967" y="105" width="1" height="1" fill="#000"/><rect x="972" y="105" width="1" height="1" fill="#000"/><rect x="977" y="105" width="1" height="1" fill="#000"/><rect x="983" y="105" width="1" height="1" fill="#000"/><rect x="988" y="104" width="1" height="3" fill="#000"/><rect x="993" y="105" width="1" height="1" fill="#000"/><rect x="998" y="105" width="1" height="1" fill="#000"/><rect x="1003" y="105" width="1" height="1" fill="#000"/><rect x="215" y="123" width="1" height="1" fill="#000"/><rect x="215" y="128" width="1" height="1" fill="#000"/><rect x="215" y="138" width="1" height="1" fill="#000"/><rect x="215" y="143" width="1" height="1" fill="#000"/><rect x="215" y="148" width="1" height="1" fill="#000"/><rect x="215" y="153" width="1" height="1" fill="#000"/><rect x="214" y="159" width="3" height="1" fill="#000"/><rect x="215" y="164" width="1" height="1" fill="#000"/><rect x="215" y="169" width="1" height="1" fill="#000"/><rect x="215" y="174" width="1" height="1" fill="#000"/><rect x="215" y="179" width="1" height="1" fill="#000"/><rect x="215" y="189" width="1" height="1" fill="#000"/><rect x="215" y="194" width="1" height="1" fill="#000"/><rect x="215" y="199" width="1" height="1" fill="#000"/><rect x="215" y="204" width="1" height="1" fill="#000"/><rect x="214" y="209" width="3" height="1" fill="#000"/><rect x="215" y="214" width="1" height="1" fill="#000"/><rect x="215" y="220" width="1" height="1" fill="#000"/><rect x="215" y="225" width="1" height="1" fill="#000"/><rect x="215" y="230" width="1" height="1" fill="#000"/><rect x="215" y="240" width="1" height="1" fill="#000"/><rect x="215" y="245" width="1" height="1" fill="#000"/><rect x="215" y="250" width="1" height="1" fill="#000"/><rect x="215" y="255" width="1" height="1" fill="#000"/><rect x="214" y="260" width="3" height="1" fill="#000"/><rect x="215" y="265" width="1" height="1" fill="#000"/><rect x="215" y="270" width="1" height="1" fill="#000"/><rect x="215" y="275" width="1" height="1" fill="#000"/><rect x="215" y="281" width="1" height="1" fill="#000"/><rect x="215" y="291" width="1" height="1" fill="#000"/><rect x="215" y="296" width="1" height="1" fill="#000"/><rect x="215" y="301" width="1" height="1" fill="#000"/><rect x="215" y="306" width="1" height="1" fill="#000"/><rect x="214" y="311" width="3" height="1" fill="#000"/><rect x="215" y="316" width="1" height="1" fill="#000"/><rect x="215" y="321" width="1" height="1" fill="#000"/><rect x="215" y="326" width="1" height="1" fill="#000"/><rect x="215" y="331" width="1" height="1" fill="#000"/><rect x="215" y="342" width="1" height="1" fill="#000"/><rect x="215" y="347" width="1" height="1" fill="#000"/><rect x="215" y="352" width="1" height="1" fill="#000"/><rect x="215" y="357" width="1" height="1" fill="#000"/><rect x="214" y="362" width="3" height="1" fill="#000"/><rect x="215" y="367" width="1" height="1" fill="#000"/><rect x="215" y="372" width="1" height="1" fill="#000"/><rect x="215" y="377" width="1" height="1" fill="#000"/><rect x="215" y="382" width="1" height="1" fill="#000"/><rect x="215" y="392" width="1" height="1" fill="#000"/><rect x="215" y="397" width="1" height="1" fill="#000"/><rect x="215" y="403" width="1" height="1" fill="#000"/><rect x="215" y="408" width="1" height="1" fill="#000"/><rect x="214" y="413" width="3" height="1" fill="#000"/><rect x="215" y="418" width="1" height="1" fill="#000"/><rect x="215" y="423" width="1" height="1" fill="#000"/><rect x="215" y="428" width="1" height="1" fill="#000"/><rect x="215" y="433" width="1" height="1" fill="#000"/><rect x="215" y="443" width="1" height="1" fill="#000"/><rect x="215" y="448" width="1" height="1" fill="#000"/><rect x="215" y="453" width="1" height="1" fill="#000"/><rect x="215" y="458" width="1" height="1" fill="#000"/><rect x="214" y="464" width="3" height="1" fill="#000"/><rect x="215" y="469" width="1" height="1" fill="#000"/><rect x="215" y="474" width="1" height="1" fill="#000"/><rect x="215" y="479" width="1" height="1" fill="#000"/><rect x="215" y="484" width="1" height="1" fill="#000"/><rect x="215" y="494" width="1" height="1" fill="#000"/><rect x="215" y="499" width="1" height="1" fill="#000"/><rect x="215" y="504" width="1" height="1" fill="#000"/><rect x="215" y="509" width="1" height="1" fill="#000"/><rect x="214" y="514" width="3" height="1" fill="#000"/><rect x="215" y="519" width="1" height="1" fill="#000"/><rect x="215" y="525" width="1" height="1" fill="#000"/><rect x="215" y="530" width="1" height="1" fill="#000"/><rect x="215" y="535" width="1" height="1" fill="#000"/><rect x="215" y="545" width="1" height="1" fill="#000"/><rect x="215" y="550" width="1" height="1" fill="#000"/><rect x="215" y="555" width="1" height="1" fill="#000"/><rect x="215" y="560" width="1" height="1" fill="#000"/><rect x="214" y="565" width="3" height="1" fill="#000"/><rect x="215" y="570" width="1" height="1" fill="#000"/><rect x="215" y="575" width="1" height="1" fill="#000"/><rect x="215" y="580" width="1" height="1" fill="#000"/><rect x="215" y="586" width="1" height="1" fill="#000"/><rect x="215" y="596" width="1" height="1" fill="#000"/><rect x="215" y="601" width="1" height="1" fill="#000"/><rect x="215" y="606" width="1" height="1" fill="#000"/><rect x="215" y="611" width="1" height="1" fill="#000"/><rect x="214" y="616" width="3" height="1" fill="#000"/><rect x="215" y="621" width="1" height="1" fill="#000"/><rect x="215" y="626" width="1" height="1" fill="#000"/><rect x="215" y="631" width="1" height="1" fill="#000"/><rect x="215" y="636" width="1" height="1" fill="#000"/><rect x="215" y="647" width="1" height="1" fill="#000"/><rect x="215" y="652" width="1" height="1" fill="#000"/><rect x="215" y="657" width="1" height="1" fill="#000"/><rect x="215" y="662" width="1" height="1" fill="#000"/><rect x="214" y="667" width="3" height="1" fill="#000"/><rect x="215" y="672" width="1" height="1" fill="#000"/><rect x="215" y="677" width="1" height="1" fill="#000"/><rect x="215" y="682" width="1" height="1" fill="#000"/><rect x="215" y="687" width="1" height="1" fill="#000"/><rect x="215" y="697" width="1" height="1" fill="#000"/></svg>
<div class="t rn" style="left:247.5px;top:99px;width:7px;height:13px;line-height:13px;text-align:center;background:#c0c0c0">3</div>
<div class="t rn" style="left:298.3px;top:99px;width:7px;height:13px;line-height:13px;text-align:center;background:#c0c0c0">2</div>
<div class="t rn" style="left:349.2px;top:99px;width:7px;height:13px;line-height:13px;text-align:center;background:#c0c0c0">1</div>
<div class="t rn" style="left:450.8px;top:99px;width:7px;height:13px;line-height:13px;text-align:center;background:#fff">1</div>
<div class="t rn" style="left:501.7px;top:99px;width:7px;height:13px;line-height:13px;text-align:center;background:#fff">2</div>
<div class="t rn" style="left:552.5px;top:99px;width:7px;height:13px;line-height:13px;text-align:center;background:#fff">3</div>
<div class="t rn" style="left:603.4px;top:99px;width:7px;height:13px;line-height:13px;text-align:center;background:#fff">4</div>
<div class="t rn" style="left:654.2px;top:99px;width:7px;height:13px;line-height:13px;text-align:center;background:#fff">5</div>
<div class="t rn" style="left:705.0px;top:99px;width:7px;height:13px;line-height:13px;text-align:center;background:#fff">6</div>
<div class="t rn" style="left:755.9px;top:99px;width:7px;height:13px;line-height:13px;text-align:center;background:#fff">7</div>
<div class="t rn" style="left:806.7px;top:99px;width:7px;height:13px;line-height:13px;text-align:center;background:#fff">8</div>
<div class="t rn" style="left:857.6px;top:99px;width:7px;height:13px;line-height:13px;text-align:center;background:#c0c0c0">9</div>
<div class="t rn" style="left:905.4px;top:99px;width:13px;height:13px;line-height:13px;text-align:center;background:#c0c0c0">10</div>
<div class="t rn" style="left:956.2px;top:99px;width:13px;height:13px;line-height:13px;text-align:center;background:#c0c0c0">11</div>
<div class="t rn" style="left:212.0px;top:177.9px;width:7px;height:13px;line-height:13px;text-align:center;transform:rotate(-90deg);background:#fff">1</div>
<div class="t rn" style="left:212.0px;top:228.8px;width:7px;height:13px;line-height:13px;text-align:center;transform:rotate(-90deg);background:#fff">2</div>
<div class="t rn" style="left:212.0px;top:279.6px;width:7px;height:13px;line-height:13px;text-align:center;transform:rotate(-90deg);background:#fff">3</div>
<div class="t rn" style="left:212.0px;top:330.5px;width:7px;height:13px;line-height:13px;text-align:center;transform:rotate(-90deg);background:#fff">4</div>
<div class="t rn" style="left:212.0px;top:381.3px;width:7px;height:13px;line-height:13px;text-align:center;transform:rotate(-90deg);background:#fff">5</div>
<div class="t rn" style="left:212.0px;top:432.1px;width:7px;height:13px;line-height:13px;text-align:center;transform:rotate(-90deg);background:#fff">6</div>
<div class="t rn" style="left:212.0px;top:483.0px;width:7px;height:13px;line-height:13px;text-align:center;transform:rotate(-90deg);background:#fff">7</div>
<div class="t rn" style="left:212.0px;top:533.8px;width:7px;height:13px;line-height:13px;text-align:center;transform:rotate(-90deg);background:#fff">8</div>
<div class="t rn" style="left:212.0px;top:584.7px;width:7px;height:13px;line-height:13px;text-align:center;transform:rotate(-90deg);background:#fff">9</div>
<div class="t rn" style="left:209.0px;top:635.5px;width:13px;height:13px;line-height:13px;text-align:center;transform:rotate(-90deg);background:#fff">10</div>
<div class="t rn" style="left:209.0px;top:686.3px;width:13px;height:13px;line-height:13px;text-align:center;transform:rotate(-90deg);background:#c0c0c0">11</div>
<div class="a" style="left:207px;top:97px;width:17px;height:17px;box-sizing:border-box;background:#c0c0c0;border:1px solid;border-color:#808080 #fff #fff #808080;box-shadow:inset 1px 1px 0 #fff,inset -1px -1px 0 #808080"></div>
<div class="a" style="left:210px;top:103px;width:11px;height:1px;background:#000"></div><div class="a" style="left:213px;top:100px;width:1px;height:11px;background:#000"></div>
<div class="a" style="left:858px;top:94px;width:1px;height:24px;background:#303030"></div>
<div class="a" style="left:204px;top:218px;width:24px;height:1px;background:#303030"></div>
<div class="a" style="left:228px;top:118px;width:778px;height:584px;background:#fff;box-shadow:inset 1px 1px 0 #000"></div>
<div class="a" style="left:397px;top:127px;width:435px;height:563px;box-sizing:border-box;background:#fff;border:1px solid #000;border-right-width:3px;border-bottom-width:3px"></div>
<svg style="left:442px;top:322px" width="187" height="216" viewBox="442 322 187 216"><path d="M620.5 351.0 C623.2 345.6 610.5 338.1 607.0 343.0 C609.1 336.6 591.2 328.9 588.0 334.8 C588.8 328.8 573.2 325.3 571.4 331.0 C570.6 323.7 552.4 324.2 552.0 331.5 C550.0 323.7 533.8 326.8 534.8 334.8 C530.5 326.5 512.8 334.2 516.0 343.0 C511.0 335.1 492.7 345.0 496.6 353.5 C490.4 347.0 476.3 358.8 481.6 366.0 C476.3 360.9 463.6 372.1 468.0 378.0 C461.2 375.3 452.2 393.2 458.5 397.0 C451.8 394.0 443.8 409.1 450.0 413.0 C443.3 412.9 442.4 424.9 449.0 425.8 C442.3 425.3 440.5 439.1 447.0 440.4 C440.5 441.7 442.3 455.5 449.0 455.0 C442.7 457.2 446.0 468.9 452.5 467.5 C446.8 469.5 450.4 482.2 456.3 481.0 C451.0 483.8 456.1 495.8 461.8 493.8 C456.2 495.9 460.6 511.4 466.5 510.3 C466 512 462 520 465 526 C468 531 478 531 486 532 L500 528 L515 522 L497.5 492.0 L495.0 480.0 L491.0 470.0 L487.5 458.0 L485.5 449.0 L484.8 441.0 L485.5 432.0 L487.5 423.0 L491.0 413.0 L495.5 405.0 L501.0 397.0 L507.0 390.0 L514.0 383.0 L528.5 376.0 L543.0 370.5 L551.0 369.5 L565.0 368.5 L575.0 371.0 L590.0 365.0 L606.0 358.0 L620.5 351.0 Z" fill="#fff" stroke="#000" stroke-width="3" stroke-linejoin="miter"/>
<path d="M550.9 331.0 L548.9 363.9 Q548.0 370.9 543.5 372.3 L558.5 372.7 Q554.0 371.1 553.4 364.1 L553.1 331.0 Z" fill="#000"/>
<path d="M535.2 345.0 L539.4 365.7 Q540.3 372.7 536.4 375.3 L550.4 371.6 Q545.7 371.3 543.0 364.8 L536.4 344.6 Z" fill="#000"/>
<path d="M569.0 341.8 L557.6 363.3 Q553.8 369.3 549.1 369.1 L565.8 375.7 Q562.2 372.7 563.6 365.7 L570.0 342.2 Z" fill="#000"/>
<path d="M579.6 342.8 L567.7 361.0 Q563.4 366.6 558.8 365.7 L571.4 372.9 Q568.2 369.4 570.8 362.8 L580.4 343.2 Z" fill="#000"/>
<path d="M599.4 347.6 L573.1 363.0 Q569.2 364.7 566.5 363.5 L574.0 374.2 Q573.8 371.3 576.8 368.2 L600.2 348.8 Z" fill="#000"/>
<path d="M518.6 358.2 L523.9 372.7 Q525.9 379.6 522.5 382.9 L536.8 375.8 Q532.1 376.4 527.9 370.7 L519.4 357.8 Z" fill="#000"/>
<path d="M500.6 364.2 L507.2 380.2 Q509.5 387.0 506.4 390.5 L521.1 382.1 Q516.5 383.0 511.8 377.6 L501.4 363.8 Z" fill="#000"/>
<path d="M488.1 374.4 L500.1 389.5 Q504.2 395.3 502.1 399.6 L514.1 387.6 Q509.8 389.7 504.0 385.6 L488.9 373.6 Z" fill="#000"/>
<path d="M483.8 391.5 L494.1 398.3 Q499.8 402.6 499.3 407.4 L506.4 391.9 Q503.2 395.4 496.1 393.9 L484.2 390.5 Z" fill="#000"/>
<path d="M471.3 403.5 L487.4 410.7 Q493.7 414.0 493.8 418.8 L499.1 402.1 Q496.3 406.0 489.2 405.0 L471.9 401.5 Z" fill="#000"/>
<path d="M463.7 417.2 L482.5 423.8 Q489.0 426.6 489.3 431.4 L493.6 414.4 Q491.0 418.4 484.0 417.8 L464.3 414.8 Z" fill="#000"/>
<path d="M466.7 430.0 L479.5 435.2 Q485.9 438.3 486.1 443.1 L490.8 426.7 Q488.1 430.7 481.0 430.0 L467.3 427.6 Z" fill="#000"/>
<path d="M459.0 441.3 L480.4 442.3 Q485.9 443.1 487.4 446.6 L487.6 434.6 Q486.1 438.1 480.4 438.6 L459.0 438.7 Z" fill="#000"/>
<path d="M464.3 455.6 L480.7 453.5 Q487.8 453.2 490.2 457.3 L486.7 441.1 Q486.2 445.8 479.6 448.4 L463.7 453.2 Z" fill="#000"/>
<path d="M472.3 463.0 L483.1 460.9 Q488.8 460.4 491.2 463.4 L487.7 450.8 Q487.2 454.6 482.1 457.1 L471.7 461.0 Z" fill="#000"/>
<path d="M470.3 474.9 L484.6 470.2 Q491.5 468.4 494.7 472.0 L488.1 456.8 Q488.5 461.6 482.5 465.4 L469.3 472.7 Z" fill="#000"/>
<path d="M474.5 489.1 L490.6 483.7 Q497.5 481.9 500.6 485.5 L494.1 470.3 Q494.5 475.1 488.5 478.8 L473.5 486.9 Z" fill="#000"/>
<path d="M476.6 507.4 L494.8 499.6 Q500.2 497.8 503.2 500.2 L496.5 487.4 Q496.8 491.2 492.2 494.6 L475.4 505.2 Z" fill="#000"/>
<path d="M570.3 330.1 L570.9 337.1 L573.1 336.9 L572.5 329.9Z" fill="#000"/>
<path d="M587.7 333.3 L581.9 339.7 L583.3 341.1 L589.3 334.7Z" fill="#000"/>
<path d="M607.3 341.7 L602.9 345.8 L604.1 347.2 L608.7 343.3Z" fill="#000"/>
<path d="M533.7 334.2 L535.1 339.7 L536.9 339.3 L535.9 333.8Z" fill="#000"/>
<path d="M515.0 342.8 L516.6 347.3 L518.4 346.7 L517.0 342.2Z" fill="#000"/>
<path d="M495.5 353.3 L497.1 358.2 L498.9 357.8 L497.7 352.7Z" fill="#000"/>
<path d="M480.8 366.2 L483.8 369.6 L485.2 368.4 L482.4 364.8Z" fill="#000"/>
<path d="M467.2 378.3 L477.9 389.1 L479.1 387.9 L468.8 376.7Z" fill="#000"/>
<path d="M459.4 397.4 L464.5 400.7 L465.5 399.3 L460.6 395.6Z" fill="#000"/>
<path d="M455.7 412.3 L449.2 411.1 L448.8 413.5 L455.3 414.3Z" fill="#000"/>
<path d="M455.3 424.9 L448.1 424.0 L447.9 426.4 L455.1 426.9Z" fill="#000"/>
<path d="M452.2 439.4 L446.0 439.0 L446.0 441.4 L452.2 441.4Z" fill="#000"/>
<path d="M455.1 453.8 L447.8 454.6 L448.2 457.0 L455.3 455.8Z" fill="#000"/>
<path d="M458.1 466.2 L451.3 467.4 L451.7 469.8 L458.5 468.2Z" fill="#000"/>
<path d="M461.2 479.5 L455.0 481.0 L455.6 483.4 L461.8 481.5Z" fill="#000"/>
<path d="M467.2 492.1 L460.4 494.2 L461.2 496.4 L467.8 493.9Z" fill="#000"/>
<path d="M471.2 508.6 L465.1 510.6 L465.9 512.8 L471.8 510.4Z" fill="#000"/>
<path d="M582.0 371.0 L575.0 371.0 L565.0 368.5 L551.0 369.5 L543.0 370.5 L528.5 376.0 L514.0 383.0 L507.0 390.0 L501.0 397.0 L495.5 405.0 L491.0 413.0 L487.5 423.0 L485.5 432.0 L484.8 441.0 L485.5 449.0 L487.5 458.0 L491.0 470.0 L495.0 480.0 L497.5 492.0 L523.5 492.0 L523.5 485.0 L528.0 460.0 L526.6 457.5 L557.6 457.5 L559.0 491.5 L570.8 491.3 L569.5 475.0 L566.4 450.0 L553.3 448.8 L570.8 431.3 L565.8 420.6 L544.5 441.3 L542.0 440.0 L534.8 436.0 L526.0 437.5 L513.5 440.6 L507.0 437.5 L504.0 428.8 L505.0 420.0 L507.0 415.0 L511.0 407.0 L517.0 400.0 L523.5 396.0 L532.0 391.5 L542.0 389.5 L557.0 387.0 L569.5 388.0 L582.0 388.5Z" fill="#000"/>
<path d="M575.0 371.0 L565.0 368.5 L551.0 369.5 L543.0 370.5 L528.5 376.0 L514.0 383.0 L507.0 390.0 L501.0 397.0 L495.5 405.0" fill="none" stroke="#000" stroke-width="2.6" stroke-linejoin="round"/>
<path d="M626 352 L612 356 L599.5 362 L582 371.500 L572 374 L582 389 L587 382 L594.5 376 L607 368.5 L626 361.6 Z" fill="#000"/>
<path d="M466 512 C463.500 518 463.500 524 466.500 528 C469.500 531 478 531.300 487 532.500" fill="none" stroke="#000" stroke-width="4.500" stroke-linecap="round"/>
<path d="M537 380 C524 384 512 392 505 400 C496 410 488.500 424 487.500 441 C487.500 452 489.500 459 492.500 467" fill="none" stroke="#fff" stroke-width="2.100"/>
<ellipse cx="534" cy="448" rx="7.600" ry="6.900" fill="#fff"/>
<path d="M491 460 L528 460 L523.5 485 L521 503.8 L519.8 518.8 L524 522 L531 522.5 L529.8 525.6 L523.5 529.4 L516 533.8 L504.8 538.5 L493.5 538.5 L486 532 L484.5 528.5 L488 526.5 L496 500 L498 488.8 Z" fill="#000"/>
<path d="M501 489.4 L512.3 493 C511.500 500 510.500 506 508.5 510 C505 515 500 519 494.500 524 C497 516 499.500 508 500.4 500 Z" fill="#fff"/>
<path d="M489.5 528.3 L501 526.6 L515.500 522 L501 528.6 Z" fill="#fff"/>
<path d="M557 482.5 L544.5 492 L532 507.5 L519.500 519 L529 526 L535.8 520 L550.8 503.8 L564.5 492 L570.8 491.3 L569 482 Z" fill="#000"/>
<path d="M528 522 L564 524.4 L574.500 525 C577 526 577 528.500 575 529.4 L557 532.5 L532 530 L524 528.500 Z" fill="#000"/>
<path d="M573 501 L584 501 C578 507 576 512 575.500 520 L576 526 L572.500 526 L572.500 517 C572.500 510 573 506 573 501Z" fill="#000"/>
<path d="M556.500 499.400 L566 498.200 L582 498.600 L594.5 497.300 L606 494.800 L608.500 496.500 L600 500.300 L582 502.300 L566 502 Z" fill="#000"/>
<path d="M604.800 436 L614.300 456.300 L607 462.600 L607.600 475 L610.300 488.500 L607.500 496.500" fill="none" stroke="#000" stroke-width="2.800" stroke-linejoin="miter"/>
<path d="M563 419.500 C572 421 578 423 584 424 C594 425.500 606 425.500 617 422 L627 423.500 L627.500 426 C626 428 624 430 622 430.6 C614 434 602 437 594.5 437.5 C588 437 580 434.500 568 432.500 Z" fill="#000"/>
<path d="M582 388.5 L597 406 L619.5 421.3 L627 424.4" fill="none" stroke="#000" stroke-width="2.600"/>
<path d="M560 406 L571.4 417.5 M567 418.800 H572" fill="none" stroke="#000" stroke-width="1.800"/>
<path d="M579 411.3 L598 406.500 L600.500 411 L594 410 Z" fill="#000"/>
<path d="M573.500 443.300 L581 439.800 L587 437 L594 436.500 L593.200 443 L589.500 444 L581 443.800 Z" fill="#000"/>
<path d="M565.8 437.800 L576 434.800 L586 435.300" fill="none" stroke="#000" stroke-width="1.300"/>
<path d="M594.5 455 C593.500 462 588 467.500 581.4 473.500" fill="none" stroke="#000" stroke-width="2.200"/>
<path d="M598 461.200 L602.6 460.400" stroke="#000" stroke-width="1.500"/>
<path d="M591 475.800 L599 472.300 L608.500 470.800 L608.500 475 L599 475.800 Z" fill="#000"/>
<rect x="586.800" y="474.800" width="1.800" height="1.800" fill="#000"/>
<path d="M595 481.300 H604.500" stroke="#000" stroke-width="2.200"/>
<path d="M540 460.500 H552 V462.200 L547.800 462.800 L554.800 471 L551.300 471.800 L555.300 479.500 L553 480.300 L548.300 472.500 L551.300 482.500 L549.500 483.200 Z" fill="#000"/>
<path d="M570 490.500 L573 491 L573 493.500 L568 494 Z" fill="#000"/></svg>
<div class="t mt" style="left:445.5px;top:629px;transform:scaleX(0.868)">THE</div>
<div class="t mt" style="left:506.5px;top:629px;transform:scaleX(0.902)">HISTORY</div>
<div class="t mt" style="left:634.6px;top:629px;transform:scaleX(0.988)">OF</div>
<div class="t mt" style="left:679.4px;top:629px;transform:scaleX(0.947)">SPARTA</div>
<div class="a" style="left:1006px;top:94px;width:16px;height:608px;background:#c8c8c8"></div>
<div class="a" style="left:1022px;top:93px;width:2px;height:625px;background:#f4f4f4"></div>
<div class="sbtn" style="left:1006px;top:94px;width:16px;height:16px"></div>
<div class="dd" style="left:1010px;top:99px;border-top:none;border-left:4px solid transparent;border-right:4px solid transparent;border-bottom:4px solid #000"></div>
<div class="sbtn" style="left:1006px;top:250px;width:16px;height:300px"></div>
<div class="sbtn" style="left:1006px;top:686px;width:16px;height:16px"></div>
<div class="dd" style="left:1010px;top:691px;border-width:4px 4px 0 4px"></div>
<div class="a" style="left:204px;top:702px;width:818px;height:16px;background:#c0c0c0"></div>
<div class="raised" style="left:204px;top:702px;width:16px;height:16px"></div>
<div class="raised" style="left:220px;top:702px;width:16px;height:16px"></div>
<div class="raised" style="left:236px;top:702px;width:16px;height:16px"></div>
<div class="raised" style="left:252px;top:702px;width:16px;height:16px"></div>
<svg style="left:204px;top:702px" width="64" height="16" viewBox="0 0 64 16"><g fill="#fff" transform="translate(1,1)"><rect x="4" y="4" width="1.5" height="8"/><path d="M11 4 V12 L6.500 8Z"/><path d="M26.500 4 V12 L22 8Z"/><path d="M37.500 4 V12 L42 8Z"/><path d="M53 4 V12 L57.500 8Z"/><rect x="58" y="4" width="1.500" height="8"/></g><g fill="#808080"><rect x="4" y="4" width="1.5" height="8"/><path d="M11 4 V12 L6.500 8Z"/><path d="M26.500 4 V12 L22 8Z"/><path d="M37.500 4 V12 L42 8Z"/><path d="M53 4 V12 L57.500 8Z"/><rect x="58" y="4" width="1.500" height="8"/></g></svg>
<svg style="left:268px;top:702px" width="290" height="16" viewBox="0 0 290 16"><path d="M111 0.500 H212 L206 14.500 H105 Z" fill="#c0c0c0" stroke="#000" stroke-width="1"/><path d="M56.500 0.500 H111 L105 14.500 H50 Z" fill="#c0c0c0" stroke="#000" stroke-width="1"/><path d="M212 0.500 H279 M206 14.500 H279" stroke="#000" stroke-width="1" fill="none"/><path d="M0 0 H56.500 L50 14.500 H7.500 Z" fill="#fff"/><path d="M0 0 L7.500 14.500 H50 L56.500 0" fill="none" stroke="#000" stroke-width="1.300"/><path d="M7 15 H50.500" stroke="#000" stroke-width="1.400"/></svg>
<div class="t" style="left:277px;top:703px;font-weight:bold;font-size:11.500px">Layout</div>
<div class="t" style="left:328px;top:703px;font-size:11px;letter-spacing:-0.450px">Controls</div>
<div class="t" style="left:387px;top:703px;font-size:11px;letter-spacing:-0.300px">Dimension Lines</div>
<div class="a" style="left:547px;top:702px;width:6px;height:16px;background:#c0c0c0;box-shadow:inset 1px 0 0 #000,inset 2px 0 0 #fff,inset -1px 0 0 #000,inset 0 -1px 0 #000"></div>
<div class="a" style="left:553px;top:702px;width:453px;height:16px;background:#c8c8c8"></div>
<div class="sbtn" style="left:553px;top:702px;width:16px;height:16px"></div>
<div class="dd" style="left:559px;top:706px;border:none;border-top:4px solid transparent;border-bottom:4px solid transparent;border-right:4px solid #000"></div>
<div class="sbtn" style="left:655px;top:702px;width:253px;height:16px"></div>
<div class="sbtn" style="left:990px;top:702px;width:16px;height:16px"></div>
<div class="dd" style="left:995px;top:706px;border:none;border-top:4px solid transparent;border-bottom:4px solid transparent;border-left:4px solid #000"></div>
<!-- bottom drawing toolbar -->
<div class="a" style="left:0;top:718px;width:1024px;height:30px;background:linear-gradient(90deg,#cecece 0,#dadada 30%,#e8e8e8 60%,#f5f5f5 100%);"></div>
<div class="a" style="left:0;top:718px;width:674px;height:29px;background:linear-gradient(180deg,#f4f4f4 0,#e8e8e8 45%,#d0d0d0 100%);"></div>
<div class="dot" style="left:4px;top:724px;height:18px"></div>
<div class="pressed" style="left:12px;top:722px;width:23px;height:23px"></div>
<svg style="left:18px;top:725px" width="12" height="17" viewBox="0 0 12 17"><path d="M1 0.800 V13 L4 10.200 L6.300 15.500 L8.500 14.500 L6.200 9.500 H10.300 Z" fill="#fff" stroke="#000" stroke-width="1"/></svg>
<div class="sep" style="left:38px;top:725px;height:16px"></div>
<svg style="left:47px;top:726px" width="14" height="14" viewBox="0 0 14 14"><path d="M0.500 13 L13.500 0.500" stroke="#5848c0" stroke-width="1.200"/></svg>
<svg style="left:68px;top:727px" width="18" height="12" viewBox="0 0 18 12"><rect x="1" y="1" width="16" height="10" fill="#8494ff" stroke="#4848c0" stroke-width="1.200"/></svg>
<svg style="left:91px;top:727px" width="18" height="12" viewBox="0 0 18 12"><ellipse cx="9" cy="6" rx="8" ry="5" fill="#8494ff" stroke="#4848c0" stroke-width="1.200"/></svg>
<div class="t" style="left:115px;top:722px;font-family:'Liberation Serif',serif;font-weight:bold;font-size:22px;line-height:24px;color:#5848b8">T</div>
<div class="sep" style="left:138px;top:725px;height:16px"></div>
<svg style="left:146px;top:725px" width="18" height="16" viewBox="0 0 18 16"><path d="M0.500 10 C3 6 5 7 6 10 C7 13 10 14 11 11 C11.500 9.500 13 10 16 11.500" fill="none" stroke="#5848c0" stroke-width="1.200"/><path d="M14 1 L16.500 3 L9.500 10 L7.500 10.500 L8 8.500 Z" fill="#ffd020" stroke="#806000" stroke-width="0.800"/></svg>
<div class="dd" style="left:168px;top:732px"></div>
<svg style="left:180px;top:726px" width="16" height="14" viewBox="0 0 16 14"><path d="M2.500 2.500 H7.500 V10.500 H13" fill="none" stroke="#4838b0" stroke-width="1.300"/><circle cx="2.500" cy="2.500" r="2.300" fill="#4838b0"/><circle cx="13" cy="10.500" r="2.300" fill="#4838b0"/></svg>
<div class="dd" style="left:202px;top:732px"></div>
<svg style="left:213px;top:725px" width="18" height="16" viewBox="0 0 18 16"><path d="M9 1 L16.500 8 L9 15 L1.500 8 Z" fill="#f4f4ff" stroke="#5848c0" stroke-width="1.200"/></svg>
<div class="dd" style="left:236px;top:732px"></div>
<svg style="left:247px;top:725px" width="18" height="17" viewBox="0 0 18 17"><circle cx="9" cy="8.500" r="7.500" fill="#ecebff" stroke="#6858c8" stroke-width="1.200"/><circle cx="6.500" cy="6.500" r="1" fill="#5848c0"/><circle cx="11.500" cy="6.500" r="1" fill="#5848c0"/><path d="M5 10.500 C7 13 11 13 13 10.500" fill="none" stroke="#5848c0" stroke-width="1.100"/></svg>
<div class="dd" style="left:270px;top:732px"></div>
<svg style="left:281px;top:727px" width="19" height="12" viewBox="0 0 19 12"><path d="M0.800 6 L6 1 V4 H13 V1 L18.200 6 L13 11 V8 H6 V11 Z" fill="#f4f4ff" stroke="#5848c0" stroke-width="1.200"/></svg>
<div class="dd" style="left:304px;top:732px"></div>
<svg style="left:315px;top:726px" width="17" height="15" viewBox="0 0 17 15"><rect x="1" y="1" width="15" height="13" fill="#a0a8ff" stroke="#5848c0" stroke-width="1.200"/><path d="M1 4.500 H16 M4.500 1 V14" stroke="#5848c0" stroke-width="1.100"/></svg>
<div class="dd" style="left:338px;top:732px"></div>
<svg style="left:349px;top:725px" width="18" height="17" viewBox="0 0 18 17"><path d="M3 1 H15 C16.500 1 17 2 17 3 V9 C17 10.500 16 11 15 11 H8 L2.500 15.500 L4.500 11 H3 C1.500 11 1 10 1 9 V3 C1 1.500 2 1 3 1 Z" fill="#f4f4ff" stroke="#5848c0" stroke-width="1.200"/></svg>
<div class="dd" style="left:372px;top:732px"></div>
<svg style="left:383px;top:725px" width="18" height="17" viewBox="0 0 18 17"><path d="M9 1 L11 6.500 H16.800 L12.200 10 L14 15.800 L9 12.300 L4 15.800 L5.800 10 L1.200 6.500 H7 Z" fill="#f4f4ff" stroke="#5848c0" stroke-width="1.200"/></svg>
<div class="dd" style="left:406px;top:732px"></div>
<div class="sep" style="left:418px;top:725px;height:16px"></div>
<svg style="left:425px;top:725px" width="18" height="16" viewBox="0 0 18 16"><path d="M3 4 L14.500 1.500 L8 8.500 L15 14 H2 Z" fill="#e8e8f8" stroke="#303030" stroke-width="1"/><g fill="#b0c0ff" stroke="#4050d0" stroke-width="0.800"><rect x="1.500" y="2.500" width="3" height="3"/><rect x="13" y="0.500" width="3" height="3"/><rect x="6.500" y="7" width="3" height="3"/><rect x="13.500" y="12.500" width="3" height="3"/><rect x="0.500" y="12.500" width="3" height="3"/></g></svg>
<svg style="left:451px;top:725px" width="14" height="16" viewBox="0 0 14 16"><path d="M9.500 1 L13 4 L6 11.500 L2.500 8.500 Z" fill="#ffd020" stroke="#806000" stroke-width="0.900"/><path d="M2.500 8.500 L6 11.500 L1 15 Z" fill="#4858d0"/></svg>
<svg style="left:472px;top:725px" width="18" height="16" viewBox="0 0 18 16"><path d="M8 4 C8 1 13 1 13 4 C13 7 7 8 7 12 H14" fill="none" stroke="#a0a0a0" stroke-width="1.200"/><path d="M1 8 L3 12 L5 8 M3 12 V6" fill="none" stroke="#a0a0a0" stroke-width="1.100"/></svg>
<svg style="left:495px;top:725px" width="18" height="16" viewBox="0 0 18 16"><path d="M9 1 L11 5 L16 3 L13 8 L17 11 L11 11 L10 15.500 L7 11.500 L2 13 L5 8 Z" fill="none" stroke="#a0a0a0" stroke-width="1.100" stroke-dasharray="2 1"/><path d="M1 3 L3 7 L5 3 M3 7 V1" fill="none" stroke="#a0a0a0" stroke-width="1.100"/></svg>
<div class="sep" style="left:518px;top:725px;height:16px"></div>
<svg style="left:525px;top:725px" width="17" height="16" viewBox="0 0 17 16"><path d="M11 3.500 A6 6 0 1 0 14.500 9" fill="none" stroke="#5060e0" stroke-width="2.600"/><path d="M8.500 0.500 L15 2 L10.500 7 Z" fill="#5060e0"/></svg>
<div class="dd" style="left:547px;top:732px"></div>
<svg style="left:559px;top:725px" width="17" height="16" viewBox="0 0 17 16"><rect x="0" y="0.500" width="1.300" height="15" fill="#20c040"/><rect x="3.500" y="3.500" width="12" height="10" fill="#f0f0ff" stroke="#8090c0"/><path d="M14 8.500 H6 M9 5.500 L6 8.500 L9 11.500" fill="none" stroke="#e02020" stroke-width="1.200"/></svg>
<div class="dd" style="left:581px;top:732px"></div>
<svg style="left:594px;top:725px" width="18" height="16" viewBox="0 0 18 16"><rect x="8" y="0.500" width="9" height="8" fill="#5060d8" stroke="#202080"/><rect x="0.500" y="8" width="9" height="7.500" fill="#5060d8" stroke="#202080"/><rect x="4" y="3.500" width="10" height="9" fill="#ffe040" stroke="#605000"/></svg>
<div class="dd" style="left:616px;top:732px"></div>
<div class="sep" style="left:628px;top:725px;height:16px"></div>
<svg style="left:635px;top:725px" width="18" height="16" viewBox="0 0 18 16"><rect x="1" y="1" width="8" height="7" fill="#9a9a9a"/><path d="M8 8 H15 L17 10 V15.500 H10 L8 13.500 Z" fill="#b0b0b0" stroke="#909090"/><path d="M3 9 V13 H6 M4.500 11.500 L6.500 13 L4.500 14.500" fill="none" stroke="#909090"/></svg>
<div class="a" style="left:661px;top:723px;width:10px;height:21px;background:linear-gradient(180deg,#b4b4b4,#7c7c7c)"></div>
<div class="dd" style="left:663px;top:738px"></div>
<!-- status bar -->
<div class="a" style="left:0;top:748px;width:1024px;height:20px;background:#c0c0c0;box-shadow:inset 0 1px 0 #fff"></div>
<div class="fld" style="left:4px;width:355px"></div>
<div class="fld" style="left:363px;width:211px"></div>
<svg style="left:369px;top:752px" width="17" height="13" viewBox="0 0 17 13" shape-rendering="crispEdges"><path d="M0 4.500 H9 M4.500 0 V9" stroke="#2030c0" stroke-width="1"/><rect x="6.500" y="6.500" width="9" height="5" fill="none" stroke="#000" stroke-dasharray="1 1"/></svg>
<div class="t" style="left:392px;top:753px;font-size:11px">1.30 / 2.40</div>
<svg style="left:473px;top:752px" width="17" height="13" viewBox="0 0 17 13" shape-rendering="crispEdges"><path d="M2.500 0 V12 M0 4.500 H1 M0 10.500 H1" stroke="#000" stroke-dasharray="1 1"/><rect x="6.500" y="3.500" width="8" height="8" fill="none" stroke="#000" stroke-dasharray="1 1"/><path d="M6 1.500 H15" stroke="#000" stroke-dasharray="2 1"/></svg>
<div class="t" style="left:495px;top:753px;font-size:11px">0.00 x 0.00</div>
<div class="fld" style="left:579px;width:37px"></div>
<div class="t" style="left:579px;top:753px;width:37px;text-align:center;font-size:11px">53%</div>
<div class="fld" style="left:621px;width:17px"></div>
<div class="t" style="left:621px;top:752px;width:17px;text-align:center;font-size:11px">*</div>
<div class="fld" style="left:642px;width:19px"></div>
<div class="fld" style="left:665px;width:127px"></div>
<div class="t" style="left:670px;top:753px;font-size:11px">Slide 1 / 1</div>
<div class="fld" style="left:795px;width:224px"></div>
<div class="t" style="left:801px;top:753px;font-size:11px">Default</div>

<!-- context menu -->
<div class="a" style="left:626px;top:210px;width:233px;height:164px;background:#c0c0c0;box-shadow:inset 1px 1px 0 #c0c0c0,inset -1px -1px 0 #000,inset 2px 2px 0 #fff,inset -2px -2px 0 #808080"></div>
<div class="a" style="left:628px;top:212px;width:228px;height:20px;background:#000080"></div>
<div class="t mi" style="left:667px;top:215px;color:#fff">Slid<u>e</u></div>
<div class="marr" style="left:848px;top:219px;border-left-color:#fff"></div>
<div class="msep" style="left:630px;top:235px;width:225px"></div>
<div class="t mi" style="left:667px;top:243px"><u>I</u>nsert Snap Point/Line...</div>
<div class="msep" style="left:630px;top:263px;width:225px"></div>
<svg style="left:643px;top:270px" width="17" height="17" viewBox="0 0 17 17"><circle cx="8.500" cy="8.500" r="7" fill="#fff" stroke="#707078" stroke-width="1.200"/><path d="M13 3.500 L9.500 9.500 L7.500 7.500 Z" fill="#4858e0"/><path d="M4 13.500 L7.500 7.500 L9.500 9.500 Z" fill="#e82020"/></svg>
<div class="t mi" style="left:667px;top:271px">Na<u>v</u>igator</div>
<div class="t mi" style="left:760px;top:271px;width:88px;text-align:right">Shift+F5</div>
<div class="msep" style="left:630px;top:291px;width:225px"></div>
<div class="t mi" style="left:667px;top:299px"><u>G</u>rid</div>
<div class="marr" style="left:848px;top:303px"></div>
<div class="msep" style="left:630px;top:319px;width:225px"></div>
<div class="t mi" style="left:667px;top:327px"><u>S</u>nap Lines</div>
<div class="marr" style="left:848px;top:331px"></div>
<div class="msep" style="left:630px;top:347px;width:225px"></div>
<svg style="left:643px;top:354px" width="17" height="16" viewBox="0 0 17 16"><rect x="0.500" y="2.500" width="12" height="11" fill="#d8b860" stroke="#6a5018"/><path d="M4 2.500 L5.500 0.500 H8 L9.500 2.500 V3.500 H4Z" fill="#f8e060" stroke="#6a5018" stroke-width="0.800"/><path d="M7.500 6.500 H13 L15.500 9 V15.500 H7.500 Z" fill="#fff" stroke="#505080"/><path d="M9 10.500 H14 M9 12.500 H14" stroke="#5060d0"/></svg>
<div class="t mi" style="left:667px;top:355px"><u>P</u>aste</div>
<div class="t mi" style="left:760px;top:355px;width:88px;text-align:right">Ctrl+V</div>
<!-- submenu -->
<div class="a" style="left:855px;top:208px;width:144px;height:112px;background:#c0c0c0;box-shadow:inset 1px 1px 0 #c0c0c0,inset -1px -1px 0 #000,inset 2px 2px 0 #fff,inset -2px -2px 0 #808080"></div>
<div class="t mi" style="left:896px;top:213px"><u>P</u>age Setup...</div>
<svg style="left:873px;top:232px" width="17" height="16" viewBox="0 0 17 16"><rect x="3.500" y="0.500" width="13" height="11" fill="#fff" stroke="#707090"/><path d="M8 9 V6 M10.500 9 V4 M13 9 V2.500" stroke="#4050e0" stroke-width="1.600"/><path d="M0.500 3 L13 15.500 H0.500 Z" fill="#ffd840" stroke="#806010" stroke-width="0.900"/><path d="M3 9 L7 13 H3 Z" fill="#303060"/></svg>
<div class="t mi" style="left:896px;top:233px"><u>S</u>lide Design</div>
<svg style="left:875px;top:252px" width="14" height="16" viewBox="0 0 14 16"><rect x="0.500" y="0.500" width="12" height="15" fill="#fff" stroke="#707090"/><path d="M2.500 3.500 H7 M2.500 5.500 H6 M2.500 7.500 H6" stroke="#4050e0"/><rect x="6" y="10" width="5" height="4" fill="#30c050" stroke="#108030" stroke-width="0.800"/></svg>
<div class="t mi" style="left:896px;top:253px"><u>S</u>lide Layout</div>
<div class="t mi" style="left:896px;top:273px"><u>R</u>ename Page</div>
<div class="msep" style="left:859px;top:293px;width:136px"></div>
<svg style="left:873px;top:300px" width="17" height="16" viewBox="0 0 17 16"><path d="M4.500 2.500 H12 L15.500 6 V15.500 H4.500 Z" fill="#fff" stroke="#808080"/><path d="M12 2.500 V6 H15.500" fill="#e8e8e8" stroke="#808080"/><path d="M3 0.500 V5.500 M0.500 3 H5.500" stroke="#10a020" stroke-width="1.800"/><path d="M5 5.500 L11 11.500 M11.500 8.500 V12 H8" fill="none" stroke="#e01818" stroke-width="1.500"/></svg>
<div class="t mi" style="left:896px;top:301px"><u>N</u>ew Page</div>

</div>
</body></html>
